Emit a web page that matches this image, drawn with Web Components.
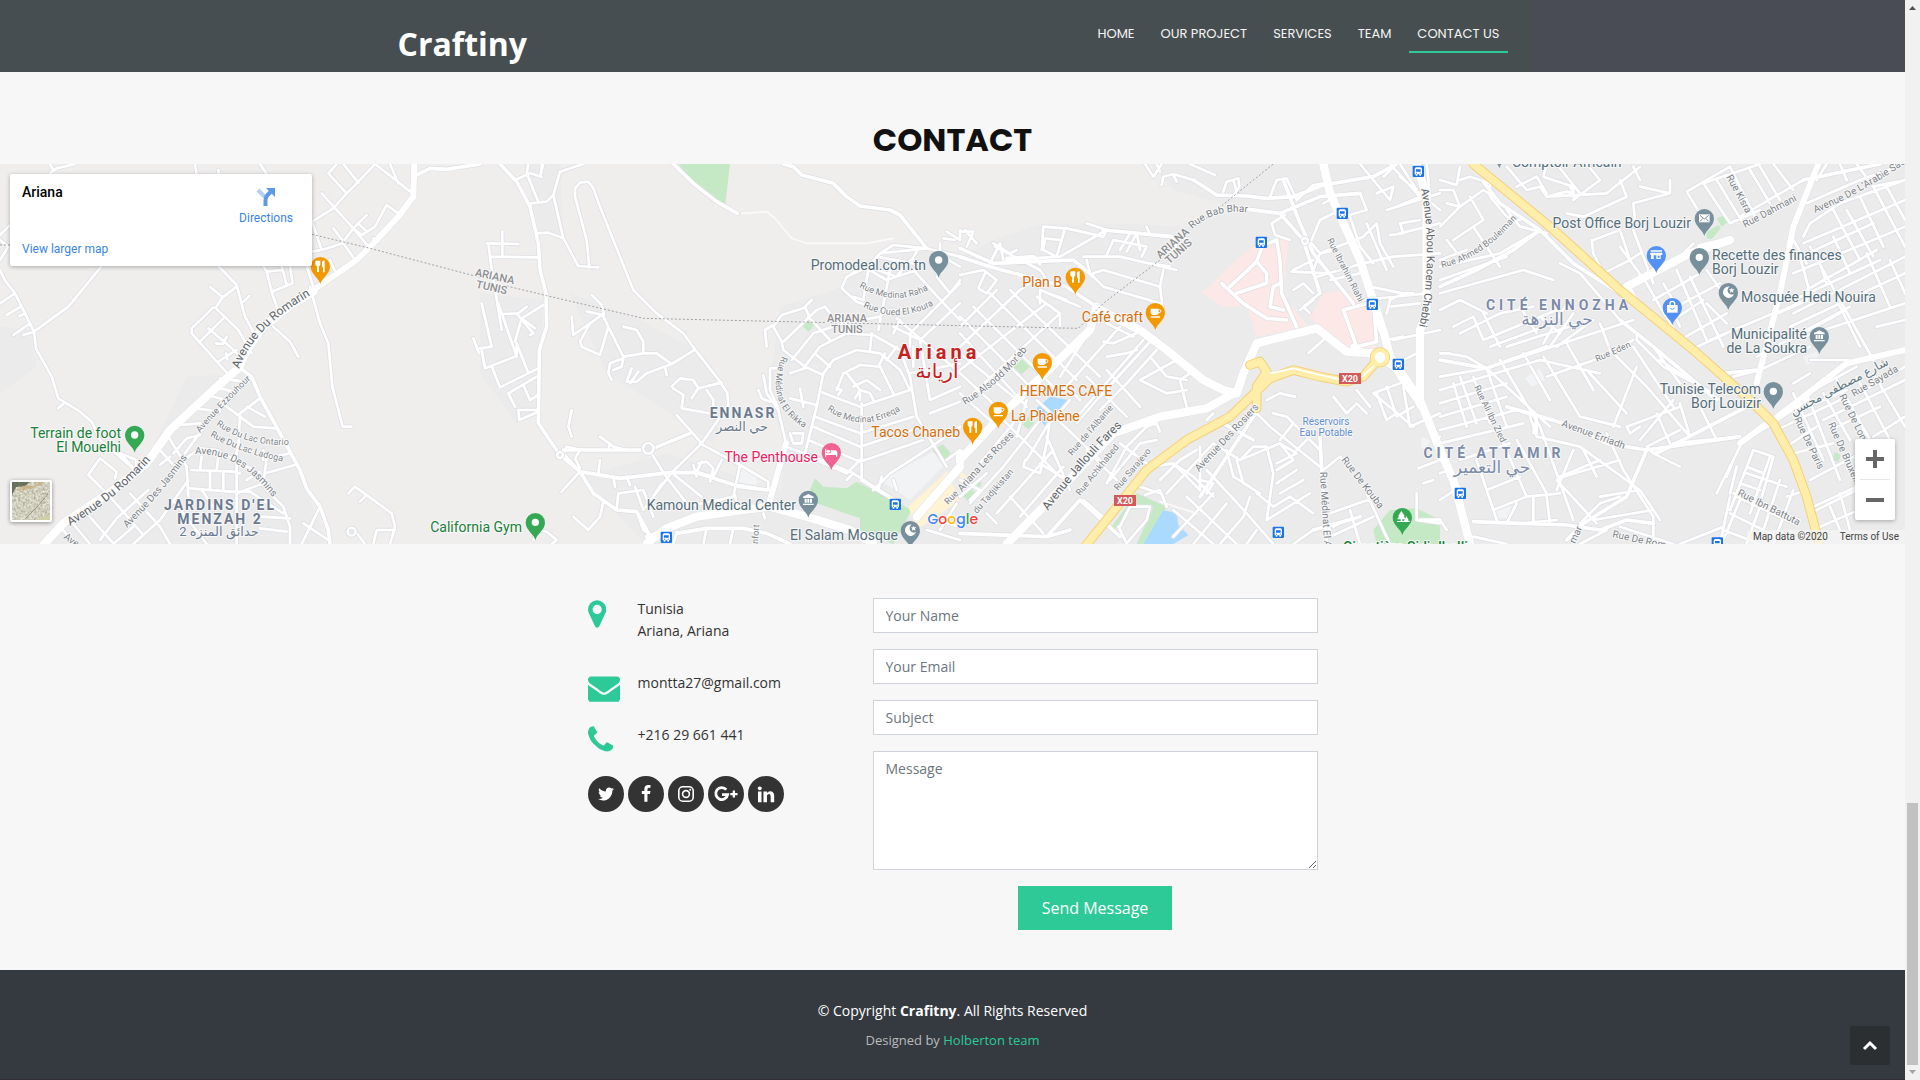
<!DOCTYPE html>
<html lang="en">
<head>
<meta charset="utf-8">
<title>Craftiny - Contact</title>
<style>
  html, body { margin: 0; background: #f7f7f7; }
  body { font: 14px/22px "Open Sans", sans-serif; color: #333; }
</style>
</head>
<body>
<craft-page>
  <site-header slot="header">
    <nav-link href="#home">HOME</nav-link>
    <nav-link href="#project">OUR PROJECT</nav-link>
    <nav-link href="#services">SERVICES</nav-link>
    <nav-link href="#team">TEAM</nav-link>
    <nav-link href="#contact" active>CONTACT US</nav-link>
  </site-header>
  <section-title>CONTACT</section-title>
  <city-map></city-map>
  <contact-panel>
    <contact-line slot="info" icon="marker">Tunisia<br>Ariana, Ariana</contact-line>
    <contact-line slot="info" icon="envelope">montta27@gmail.com</contact-line>
    <contact-line slot="info" icon="phone">+216 29 661 441</contact-line>
    <social-links slot="info"></social-links>
    <contact-form slot="form"></contact-form>
  </contact-panel>
  <site-footer slot="footer"></site-footer>
</craft-page>

<script>
const define = (name, html, setup) => {
  const tpl = document.createElement('template');
  tpl.innerHTML = '<style>*{box-sizing:border-box}</style>' + html;
  customElements.define(name, class extends HTMLElement {
    constructor() {
      super();
      this.attachShadow({ mode: 'open' }).append(tpl.content.cloneNode(true));
    }
    connectedCallback() { if (setup) setup(this, this.shadowRoot); }
  });
};

define('craft-page', `
<style>
  :host { display: grid; grid-template-columns: minmax(0, 1fr) 15px; min-height: 100vh; }
  .page { display: flex; flex-direction: column; }
  main { flex: 1; }
</style>
<div class="page">
  <slot name="header"></slot>
  <main><slot></slot></main>
  <slot name="footer"></slot>
</div>
<scroll-rail></scroll-rail>`);

define('scroll-rail', `
<style>
  :host { display: flex; flex-direction: column; align-items: center; background: #f1f1f1; height: 100vh; position: sticky; top: 0; }
  svg { display: block; width: 15px; height: 15px; }
  .track { flex: 1; width: 11px; display: flex; flex-direction: column; justify-content: flex-end; }
  .thumb { height: 25%; background: #c1c1c1; }
</style>
<svg viewBox="0 0 15 15"><path d="M4 10h7L7.500 6z" fill="#505050"/></svg>
<div class="track"><div class="thumb"></div></div>
<svg viewBox="0 0 15 15"><path d="M4 5h7L7.500 9z" fill="#a3a3a3"/></svg>`);

define('site-header', `
<style>
  :host { display: block; background: linear-gradient(90deg, #464e51 0, #464e50 80.400%, #494c55 80.500%, #494c55 100%); }
  .inner { max-width: 1110px; height: 72px; margin: 0 auto; display: flex; justify-content: space-between; align-items: flex-start; }
  a { margin-top: 22px; font: 700 32px/44px "Open Sans", sans-serif; color: #fff; text-decoration: none; }
  nav { display: flex; gap: 10px; margin-top: 15px; }
</style>
<header class="inner"><a href="#top">Craftiny</a><nav><slot></slot></nav></header>`);

define('nav-link', `
<style>
  :host { display: block; }
  a { display: block; height: 38px; padding: 0 8px; font: 400 13px/38px Poppins, Inter, sans-serif; color: #f4f4f4; text-decoration: none; white-space: nowrap; }
  :host([active]) a { border-bottom: 2px solid #2dca98; }
</style>
<a><slot></slot></a>`, (el, root) => root.querySelector('a').href = el.getAttribute('href'));

define('section-title', `
<style>
  :host { display: block; padding: 48px 0 4px; text-align: center; }
  h3 { margin: 0; font: 700 32px/40px Poppins, Inter, sans-serif; color: #111; }
</style>
<h3><slot></slot></h3>`);

define('contact-panel', `
<style>
  :host { display: grid; grid-template-columns: 255fr 445fr; column-gap: 30px; max-width: 730px; margin: 0 auto; padding: 54px 0 40px; }
  .info { display: flex; flex-direction: column; gap: 20px; }
</style>
<div class="info"><slot name="info"></slot></div>
<slot name="form"></slot>`);

const GLYPHS = {
  marker: ['384 0 1024 1792', 'M1152 640q0-106-75-181t-181-75-181 75-75 181 75 181 181 75 181-75 75-181zm256 0q0 109-33 179l-364 774q-16 33-47.5 52t-67.5 19-67.5-19-46.5-52l-365-774q-33-70-33-179 0-212 150-362t362-150 362 150 150 362z'],
  envelope: ['0 0 1792 1792', 'M1792 710v794q0 66-47 113t-113 47h-1472q-66 0-113-47t-47-113v-794q44 49 101 87 362 246 497 345 57 42 92.5 65.5t94.5 48 110 24.5h2q51 0 110-24.5t94.5-48 92.5-65.5q170-123 498-345 57-39 100-87zm0-294q0 79-49 151t-122 123q-376 261-468 325-10 7-42.5 31t-54 38.5-52 32.5-57.5 27-50 9h-2q-23 0-50-9t-57.5-27-52-32.5-54-38.5-42.5-31q-91-64-262-182.5t-205-142.5q-62-42-117-115.5t-55-136.5q0-78 41.5-130t118.5-52h1472q65 0 112.5 47t47.5 113z'],
  phone: ['192 0 1408 1792', 'M1600 1240q0 27-10 70.5t-21 68.5q-21 50-122 106-94 51-186 51-27 0-53-3.5t-57.5-12.5-47-14.5-55.5-20.5-49-18q-98-35-175-83-127-79-264-216t-216-264q-48-77-83-175-3-9-18-49t-20.5-55.5-14.5-47-12.5-57.5-3.5-53q0-92 51-186 56-101 106-122 25-11 68.5-21t70.5-10q14 0 21 3 18 6 53 76 11 19 30 54t35 63.5 31 53.5q3 4 17.5 25t21.5 35.5 7 28.5q0 20-28.5 50t-62 55-62 53-28.5 46q0 9 5 22.5t8.5 20.5 14 24 11.5 19q76 137 174 235t235 174q2 1 19 11.5t24 14 20.5 8.5 22.5 5q18 0 46-28.5t53-62 55-62 50-28.5q14 0 28.5 7t35.5 21.5 25 17.5q25 15 53.5 31t63.5 35 54 30q70 35 76 53 3 7 3 21z']
};

define('contact-line', `
<style>
  :host { display: grid; grid-template-columns: 50px 1fr; min-height: 32px; }
  :host([icon=marker]) { padding-bottom: 10px; }
  svg { display: block; height: 32px; fill: #2dca98; }
  p { margin: 0; }
</style>
<svg><path/></svg><p><slot></slot></p>`, (el, root) => {
  const [box, d] = GLYPHS[el.getAttribute('icon')];
  const svg = root.querySelector('svg');
  svg.setAttribute('viewBox', box);
  svg.setAttribute('preserveAspectRatio', 'xMinYMin meet');
  svg.firstChild.setAttribute('d', d);
});

define('social-links', `
<style>
  :host { display: flex; gap: 4px; }
  a { display: grid; place-items: center; width: 36px; height: 36px; border-radius: 50%; background: #333; }
  svg { width: 18px; height: 18px; fill: #fff; }
  svg.wide { width: 26px; }
</style>
<a href="#twitter" aria-label="Twitter"><svg viewBox="0 0 1792 1792"><path d="M1684 408q-67 98-162 167 1 14 1 42 0 130-38 259.5t-115.5 248.5-184.5 210.5-258 146-323 54.5q-271 0-496-145 35 4 78 4 225 0 401-138-105-2-188-64.5t-114-159.5q33 5 61 5 43 0 85-11-112-23-185.5-111.5t-73.5-205.5v-4q68 38 146 41-66-44-105-115t-39-154q0-88 44-163 121 149 294.5 238.5t371.5 99.5q-8-38-8-74 0-134 94.5-228.5t228.5-94.5q140 0 236 102 109-21 205-78-37 115-142 178 93-10 186-50z"/></svg></a>
<a href="#facebook" aria-label="Facebook"><svg viewBox="0 0 1792 1792"><path d="M1343 12v264h-157q-86 0-116 36t-30 108v189h293l-39 296h-254v759h-306v-759h-255v-296h255v-218q0-186 104-288.5t277-102.5q147 0 228 12z"/></svg></a>
<a href="#instagram" aria-label="Instagram"><svg viewBox="0 0 18 18"><rect x="1.800" y="1.800" width="14.400" height="14.400" rx="4" fill="none" stroke="#fff" stroke-width="1.600"/><circle cx="9" cy="9" r="3.400" fill="none" stroke="#fff" stroke-width="1.600"/><circle cx="13.200" cy="4.800" r="1"/></svg></a>
<a href="#google" aria-label="Google Plus"><svg class="wide" viewBox="0 0 26 18"><path d="M13.300 4.600A6 6 0 1 0 14.700 9.600H9" fill="none" stroke="#fff" stroke-width="2.800"/><path d="M22 5.500v2.400h2.500v2.300H22v2.400h-2.300v-2.400h-2.400V7.900h2.400V5.500z"/></svg></a>
<a href="#linkedin" aria-label="LinkedIn"><svg viewBox="300 290 1180 1180"><path d="M365 1414h231v-694h-231v694zm246-908q-1-52-36-86t-93-34-94.500 34-36.500 86q0 51 35.500 85.500t92.500 34.500h1q59 0 95-34.500t36-85.500zm585 908h231v-398q0-154-73-233t-193-79q-136 0-209 117h2v-101h-231q3 66 0 694h231v-388q0-38 7-56 15-35 45-59.500t74-24.500q116 0 116 157v371z"/></svg></a>`);

define('contact-form', `
<style>
  :host { display: block; }
  form { display: flex; flex-direction: column; gap: 16px; }
  input, textarea { display: block; width: 100%; margin: 0; border: 1px solid #ced4da; border-radius: 0; background: #fff; color: #495057; font: 14px/21px "Open Sans", sans-serif; padding: 6px 12px; }
  input { height: 35px; }
  textarea { height: 119px; resize: vertical; }
  ::placeholder { color: #6c757d; opacity: 1; }
  button { align-self: center; border: 0; background: #2dca98; color: #fff; font: 16px/24px "Open Sans", sans-serif; padding: 10px 24px; }
</style>
<form>
  <input type="text" aria-label="Your Name" placeholder="Your Name">
  <input type="email" aria-label="Your Email" placeholder="Your Email">
  <input type="text" aria-label="Subject" placeholder="Subject">
  <textarea aria-label="Message" placeholder="Message"></textarea>
  <button type="button">Send Message</button>
</form>`);

define('site-footer', `
<style>
  :host { display: block; background: #343a40; text-align: center; color: #fff; position: relative; padding: 30px 0 29px; border-bottom: 1px solid #322c3a; }
  .credits { margin-top: 8px; font-size: 13px; line-height: 20px; color: #bbb; }
  .credits a { color: #2dca98; text-decoration: none; }
  .top { position: absolute; right: 15px; bottom: 14px; width: 40px; height: 39px; display: grid; place-items: center; background: #2b2f32; border-radius: 2px; }
</style>
<footer>
  <div>© Copyright <strong>Crafitny</strong>. All Rights Reserved</div>
  <div class="credits">Designed by <a href="#team">Holberton team</a></div>
</footer>
<a class="top" href="#top" aria-label="Back to top"><svg width="16" height="12" viewBox="0 0 16 12"><path d="M2 9l6-6 6 6" fill="none" stroke="#fff" stroke-width="3"/></svg></a>`);

/* The map is surveyed on four sheets, each 1440 units wide, at three units per pixel. */
const SHEETS = [
{
  lane: `150 40 170 25 225 12|160 30 150 12|585 12 590 42|800 42 780 12|655 30 657 42|0 225 30 195|0 240 25 260 0 300|0 330 14 360 45 400 75 460 102 515|0 430 45 400|20 465 62 440|40 525 90 490|58 468 75 460|102 515 205 440 305 318|102 515 108 566 155 650 175 715 240 755 275 785 300 840 405 930|70 525 102 515|175 745 192 730|655 318 710 375 735 470 765 525|630 380 668 412|710 380 668 412 648 442|748 408 730 425|640 442 575 505 575 520 682 640|648 445 715 510 755 580|670 475 600 545|625 505 690 560 720 590|648 550 668 552 680 530|655 605 710 570|678 580 682 598|790 318 800 335 815 395 835 455|845 318 860 375|870 318 878 370 815 395|800 335 845 330|820 500 870 545 895 590|930 380 960 490 985 550 997 680 1028 800 1055 800|920 318 945 395|936 185 1000 145 1040 100 1070 70 1125 12|985 40 1010 12|985 40 1040 100|1030 12 1075 68|965 100 1060 205 1110 265|1125 12 1235 98|1195 70 1170 12|1000 205 1030 245 1060 205 1100 165|1075 190 1100 215|1060 205 1085 225 1125 200 1160 135 1195 160|936 185 965 270 1030 250 1065 300|936 275 965 270|990 300 1010 345|1120 235 1135 245|1420 535 1437 580|750 655 620 790 555 880|660 655 735 665|640 680 700 695|620 705 680 720|585 745 660 755|540 795 600 790|680 740 760 800 830 805|740 740 795 770|780 715 720 760 715 870|520 880 560 835 600 825|505 830 560 920 565 1010|480 870 520 915|480 915 510 890|545 905 600 865 650 870 760 930 800 990 850 1040 870 1100 870 1152|868 880 800 895 790 970 710 1000|885 915 795 940|790 870 790 900|710 870 710 1152|575 930 700 935 720 940|570 985 690 995 750 995|605 890 600 930|655 890 650 930|630 935 630 985|670 940 670 990|605 990 640 1040|750 995 850 1060|740 960 780 935|780 1070 870 1075|780 1105 860 1115|265 945 300 895 350 935 345 955|265 945 310 990|360 880 405 930 410 900 360 880|390 1000 480 1100 510 1152|445 990 350 1075 300 1140|565 960 480 1080 400 1152|180 1100 225 1152|210 1080 270 1152|260 1060 340 1150|330 1010 430 1125|520 1020 620 1152|400 1100 340 1152|1045 1000 1065 980 1175 1060 1185 1100 1170 1152|1080 1025 1095 1010|1040 1115 1060 1105 1095 1152|1120 1152 1130 1110 1185 1110|960 1040 905 1152|910 1090 985 1140`,
  street: `715 620 755 650 780 710 900 930 920 985 960 1040 985 1110 990 1152|1250 45 1290 25 1340 28 1440 12`,
  road: `1243 12 1240 110 1195 170 1120 250 1070 300 940 390`,
  avenue: `940 395 880 430 790 500 740 570 718 622 640 690 510 810 440 910 340 990 190 1090 130 1155`,
  blocks: ['560 650 740 640 900 930 980 1152 140 1152 440 900', '0 500 90 510 110 620 0 700'],
  rings: ['1055 1115 12']
},
{
  lane: `105 60 150 40 185 50|145 12 140 40 175 125|190 12 180 50|150 130 200 125 220 105 240 35 310 12|220 105 250 235 295 318 355 322|170 220 205 218 250 235|328 322 320 240 285 110 285 85 300 68 325 65 340 85 360 140 460 390 530 460 610 520 648 572 720 665 742 700 745 735 700 800 665 850 575 938 490 1050|20 250 115 252|67 215 67 290|25 250 30 290 172 292|30 295 45 385 65 510|55 430 110 590 110 550|72 462 115 460 140 440|190 435 125 475 105 545|110 460 160 520 150 525|125 475 165 505|5 430 35 560 0 565|5 570 15 625 110 588|35 618 60 682 175 625|110 550 145 640|170 650 85 700 105 740|130 675 150 720 175 705|175 750 115 750 118 780 175 755|275 470 280 525 330 490 365 465|335 405 365 435 372 465 320 455|370 470 385 500 360 585 305 560 300 545 330 490|385 500 430 590 490 580 530 580 575 612|430 500 470 510 490 545 490 580|430 595 390 610 385 640 395 660|430 595 425 620 400 630|440 665 470 665 500 640 575 612 640 572|455 625 440 665|475 635 450 670|555 620 560 645|575 680 600 655 640 660 655 685 725 668|580 685 610 705 605 745 690 760|655 685 635 715|680 690 700 720 700 750|590 765 665 850|185 12 185 30|245 995 300 935|300 935 250 880 260 860 300 870 285 895 300 925|360 830 400 860 440 870|385 870 390 850|275 750 265 800 275 830|505 865 555 945 620 1030 640 1050|360 900 355 940|400 950 405 980|440 950 450 975|640 915 650 950|655 910 680 905 700 925 690 965|725 900 700 950 650 935 665 905|660 850 780 915 865 965 865 990|780 915 760 1010 600 1045|780 975 865 990|765 1005 770 1040|575 938 665 1010|545 970 500 1040|410 1045 415 1000 490 990 520 1070|370 1025 360 1070 325 1110 280 1070|470 1055 490 1110 520 1130|465 980 490 1050|590 1115 580 1152|680 1105 670 1152|760 1105 750 1152|855 1075 850 1060|160 1140 170 1110 200 1115 230 1140 215 1152|910 570 905 545 880 500 905 465 970 445 995 420|975 440 990 475|880 495 855 510 860 560|910 545 1010 450 1035 440 1050 460|985 470 1050 540|910 570 975 620 1030 645|935 600 1000 520 1090 490 1200 470|850 645 860 700 895 750 918 850|870 625 870 690 895 745|835 690 845 715 870 725|875 625 905 625|930 640 975 625|1030 640 1010 740 975 880|970 625 1020 560 1100 520 1180 525 1260 570 1290 650 1310 770 1370 870|1030 640 1060 600 1130 570 1200 580 1260 630 1290 690|1070 690 1090 640 1140 615 1200 620 1240 700|1100 640 1140 690 1140 720|1120 680 1160 660 1200 690|1125 715 1140 690 1170 700 1180 720|1070 685 1085 690 1075 705|1010 585 1050 620|1175 520 1170 570|1250 560 1220 600|1215 580 1195 620|1020 695 1140 740 1290 690|930 715 1010 735|960 685 970 740|1005 770 1140 820 1300 770|1000 800 1140 860 1310 805|985 840 1140 905 1330 840|960 880 1100 940 1140 900|1145 730 1145 960|930 820 940 850 965 850 970 820 940 820|915 860 975 880 1120 940 1260 1030|1100 960 1120 940|1205 950 1195 990 1210 1000|1240 960 1250 990|1180 990 1230 940 1340 870 1440 800|1370 870 1400 920|1400 900 1440 870|1340 265 1240 255 1200 280 1165 320 1100 350 1085 385 1130 425 1200 450 1300 450|1200 280 1340 265 1440 290|1110 345 1150 320 1220 360 1310 330|1165 320 1250 350 1290 300|1190 290 1300 310|1310 275 1290 310|1165 330 1150 420 1120 410|1230 330 1195 510|1300 330 1400 440 1440 480|1370 350 1410 400 1440 360|1370 280 1440 320|1440 370 1290 520 1290 560|1250 475 1440 640|1440 430 1320 540 1240 500|1290 640 1440 610|1240 520 1260 480|1350 720 1440 680|1320 540 1350 720|1350 760 1440 725|1300 560 1300 620|1400 215 1440 240 1440 210|1390 235 1425 240|1380 270 1380 250|1340 1110 1440 1140|1370 1080 1440 1100|1430 1030 1380 1110`,
  street: `910 12 940 20 965 45 1060 70 1100 110 1140 138 1230 150 1260 165 1340 265|580 12 640 70 710 125 772 160|240 885 300 935 420 955 570 938 650 938 780 980 860 990|300 935 340 1000 410 1050 470 1055 500 1110 520 1145|250 870 500 870 520 865 630 820|60 12 110 65 150 140 175 250 180 330 198 400 200 500 178 570 175 790 240 885|1145 960 1260 1030|500 1130 540 1115|590 1120 680 1105 790 1105 860 1120 930 1152`,
  road: `918 850 870 1020`,
  avenue: `500 1150 560 1105 650 1070 790 1050 870 1040 980 1070 1110 1110 1180 1150|1310 1070 1440 920`,
  parks: ['595 12 750 12 736 132 700 115 640 70', '1005 955 1030 980 1100 985 1130 965 1295 1050 1240 1152 1140 1110 1140 1075 1010 1030 990 990', '985 480 1002 498 985 515 968 498', '1388 852 1412 880 1390 905 1358 872'],
  pale: ['785 920 830 945 830 985 775 965', '1200 960 1360 875 1390 920 1290 1020'],
  sand: ['1285 1040 1400 935 1440 1020 1310 1110'],
  blocks: ['0 400 190 420 175 750 110 790 0 640', '270 400 480 480 650 570 745 700 700 850 570 760 380 640', '900 440 1090 380 1160 300 1350 260 1440 280 1440 1152 500 1152 300 950 560 880 900 990 920 850 840 690 880 600', '130 12 240 12 250 235 180 220'],
  rings: ['505 865 16', '240 885 9']
},
{
  lane: `555 12 580 50 605 12|590 12 600 35|690 12 765 45|605 75 610 50 640 42 700 60|640 45 650 65|790 95 800 65 835 55 838 80 820 110|820 60 830 95|975 165 935 190 945 225 990 240|930 110 950 60 980 55 1010 120|1010 120 1060 75 1090 70|0 215 40 215 20 260|15 210 50 250|100 250 150 280 170 270|90 310 120 250 130 300|0 345 70 330 110 360 80 400 55 385 75 340|245 270 250 200 315 205 290 290 250 270 255 235 300 240|320 205 430 230 440 210 380 190|140 300 300 290 440 210 620 230|480 270 510 220|500 275 530 220|440 285 460 240 560 260 545 290|530 220 540 270|370 290 480 290 650 330|570 310 630 320|560 200 570 225|105 260 240 330 260 360|380 300 390 340 430 380 600 430|400 340 430 330 600 380|610 330 600 380 610 460|240 430 240 390 320 420|240 390 360 440|230 410 300 460 300 500|430 545 460 550 530 520|440 490 520 530|410 480 300 650|480 500 310 690|550 540 360 760|575 540 410 720 350 790|590 570 500 670 420 750|650 600 540 660 620 700 680 690|690 640 660 660 680 740|570 590 620 650 680 660|440 590 500 580 530 570|440 630 540 740|380 650 500 770|330 690 360 720|600 815 590 790 560 800 500 860 440 970|590 840 540 850 450 960|480 850 560 910|0 560 180 390 210 370|0 500 110 390|0 630 260 430|40 700 300 460|150 390 420 650|90 400 350 660|40 440 290 690|0 470 240 710|0 520 200 740|0 580 160 710|0 640 110 740|0 700 100 790|120 770 300 950|200 720 170 830|230 720 420 900|330 720 260 800 200 900|160 790 60 910|240 780 130 920 30 1030|280 870 110 1060|270 780 260 850 240 940 190 920 195 900|260 830 330 990|150 1010 250 1120|320 960 240 910|0 1010 80 940|370 1020 440 1080|380 870 470 960|310 920 180 1070|130 950 90 1000|30 1020 60 990 0 960|80 1060 110 1090|480 1100 510 1040 570 1040 560 1080 500 1150 475 1100|555 1005 600 990 620 1040|540 980 600 1000|580 920 640 910 720 990 720 860|600 960 660 900 710 870|640 910 700 950 760 1010|620 1000 760 850|740 930 860 1060 940 1152|680 1010 830 1152|640 1050 760 1152|760 1000 640 1130|800 1030 700 1152|850 1070 780 1152|890 1110 860 1152|720 960 760 970 740 1000|760 850 840 900 960 850 1000 900|830 900 850 970 900 1000|800 870 820 950 870 980|840 900 880 860 920 860 940 940 920 1080|960 850 1010 880 950 910|1000 900 950 930|1010 930 950 970|1030 960 960 1000|1050 1000 920 1080|890 1000 940 1040 990 1010 1060 1060|870 1010 850 1070|940 760 980 770 1080 870|880 750 930 800 1080 920|920 720 960 700 1005 710|960 840 1000 790|1010 870 1050 830|1140 890 1090 930|1140 890 1160 910|1080 830 1085 930|1220 1000 1270 1110 1290 1152|1170 1050 1200 1152|1110 1060 1250 1010|1120 1100 1160 1080|1060 1110 1000 1152|1240 1070 1110 1130|1090 1070 1110 1110|1120 710 1160 760 1190 730 1220 760|1190 690 1230 740|1250 700 1280 780 1310 760|1280 680 1310 770 1360 740|1240 700 1320 670|1330 680 1350 800 1440 760|1240 700 1360 800|1440 900 1375 925|1370 1000 1370 1080 1440 1090|1420 960 1390 970|1420 840 1440 830|1280 540 1330 530|740 780 760 760|1045 580 1090 540|1050 460 1030 440 1080 400|1020 450 1060 420|1060 400 1030 370 1000 390|995 335 1110 340|1060 330 1080 280 1130 270|1080 280 1210 230 1250 190|1000 330 1060 300|1070 350 1210 310 1300 290 1440 280|1110 360 1200 340|1080 280 1055 250|1080 180 1140 150 1110 120 1090 130|1080 180 1055 240|1150 105 1200 100 1220 150 1150 170|1170 170 1200 260 1240 310|1220 190 1280 330|1250 190 1260 250 1300 320|1320 50 1440 150|1200 12 1290 120 1300 80 1250 100|1270 50 1310 12|1290 12 1380 110|1440 100 1280 150|1380 110 1310 140|1380 180 1320 190 1330 220 1290 225|1440 190 1300 225|1210 420 1400 400|1230 380 1330 400 1290 420 1280 460|1330 400 1360 400|1290 440 1380 430|1320 12 1370 90|1400 12 1410 110|1300 540 1440 510|1310 610 1370 580`,
  street: `0 290 90 320 200 350 320 380 410 440|0 265 100 310 340 300 400 350|700 60 770 105 860 108 920 115 1000 110 1090 75 1240 50 1310 12|840 145 960 160 1080 110 1200 100|140 295 220 290 240 310|430 210 640 230 650 280|970 60 1020 190 1060 280 1180 430|960 160 1030 240 1080 400|785 370 850 430 920 475 980 480|890 305 920 340 920 370 830 400|910 250 890 305 810 380|925 250 950 240 960 300 965 400 1010 500|960 370 940 380 930 440 970 450|780 785 880 840|1150 450 1240 425 1250 545 1190 560 1150 450|1080 830 1085 930 1100 1152|720 1010 900 740|1380 1080 1440 1080|0 1120 260 1130 330 1110|260 1130 360 1020 480 1130|1060 1110 1200 1070`,
  road: `1180 560 1300 620 1370 720 1380 740`,
  avenue: `0 900 130 760 390 510 410 440|0 905 0 880|410 445 540 510 620 570 730 660 790 690 830 700 850 640 890 550 1070 505 1160 575 1240 580|140 1152 260 1030 460 820 600 770 740 745 830 695|1090 12 1110 100 1200 300 1275 530 1290 590|1370 12 1400 110 1400 460 1380 510 1380 720|1290 590 1380 720 1440 870`,
  parks: ['185 598 210 620 185 642 160 622', '205 770 222 790 205 808 188 795', '25 980 48 1000 22 1022 3 1002', '52 958 66 972 52 988 40 974', '455 1100 530 1000 620 1040 550 1152 530 1152 580 1040 500 1050 470 1105', '1240 1110 1290 1050 1370 1045 1440 1080 1440 1152 1250 1152'],
  water: ['230 745 270 710 325 720 305 745 265 775 255 798 240 780', '550 1152 610 1050 650 1060 655 1095 685 1125 640 1152'],
  medical: ['725 400 840 290 900 245 985 232 970 410 1045 500 890 530 860 440 790 440', '1050 470 1090 400 1150 390 1200 420 1245 420 1250 565 1160 570 1090 505'],
  sand: ['0 930 20 950 0 975'],
  pale: ['1385 830 1410 840 1400 870 1382 860'],
  blocks: ['0 290 0 1152 1440 1152 1440 12 570 12 640 90 840 145 690 200 430 190 250 190 100 240'],
  rings: ['1260 592 22', '1035 243 9'],
  highway: `870 615 900 605 920 635 890 680 890 745|375 1160 560 930 680 840 810 770 930 655 1000 630 1080 650 1160 665 1210 650 1240 615`,
  median: `930 640 1000 625 1080 645 1140 658|1200 655 1240 620`
},
{
  lane: `0 90 40 90 60 140 0 200|0 60 50 75 60 20|60 60 90 50 150 70 150 110|60 140 130 90 160 110|20 130 60 140|90 110 130 180 40 240|150 110 200 170 240 180|20 240 60 290|0 320 180 280 300 210|0 300 80 270|0 360 200 290|100 200 180 320|200 150 240 200 320 220|200 20 260 90 300 80 320 110 380 95 400 100 390 80|230 80 290 50 320 100|320 12 310 50 400 80 400 110|350 12 420 100|440 12 480 60 400 120|320 110 500 100 600 20|380 160 430 170 560 110|560 110 540 60|585 180 580 130 690 100 690 60|600 60 580 20|600 80 690 100|460 240 540 210 570 300 490 340 460 280 455 240|540 260 620 370|570 300 600 280|620 370 660 440 710 520|580 210 640 370|740 95 870 20|740 95 780 160|760 250 700 310|790 70 870 190|830 60 910 190|870 20 950 180|930 30 990 130|960 20 1020 120|790 70 960 12|870 190 960 150|900 170 1090 60|1000 12 1060 90|1100 130 1260 60 1395 12|1160 12 1130 60|1200 12 1220 60|1250 12 1300 80 1395 60|1090 230 1110 190 1200 130 1395 60|1090 250 1395 120|1060 300 1300 190|1060 340 1395 200|1180 150 1260 300|1220 150 1300 290|1260 110 1330 260|1060 240 1100 310|1110 260 1300 600|1300 80 1395 260|1340 80 1395 180|1080 290 1110 400|1130 280 1160 370|1100 390 1310 270|1060 420 1320 300|1060 460 1395 290|1050 500 1395 340|1180 230 1230 340|1280 280 1350 440|1200 440 1260 560|1350 300 1395 400|1050 540 1200 460|1090 530 1395 430|1310 500 1395 480|880 650 960 630 1110 560|950 590 1230 440|1110 600 1225 600|640 420 780 340|670 370 710 440 840 370|710 330 800 540|750 350 850 560|800 330 870 430|690 440 720 500|720 540 860 460|750 570 860 520|810 540 1000 460|700 480 790 420|800 430 860 490|0 400 250 330 340 360|360 310 420 340 540 480|0 450 60 420 140 460|40 500 100 470 130 540|60 520 180 460 280 440|130 540 350 450|150 560 340 490|200 560 420 490|310 550 380 430|330 560 400 460|350 560 460 480|300 470 360 520|130 460 180 560|240 440 290 520|20 580 80 590 140 625 330 800|0 650 140 625 580 480|0 690 300 600 480 640|0 580 30 580|100 650 150 790|40 670 80 800|60 650 110 790|140 625 200 800|180 600 300 800|0 730 200 670|0 770 200 710|0 810 230 750|0 850 250 790|200 740 290 770 280 820|250 580 330 720|310 590 420 770 540 800|320 650 490 590|380 550 460 690|480 490 510 570 620 680 750 830|590 520 590 540 670 620 820 700|640 560 720 670|580 540 530 570|440 630 560 760|590 620 520 800|580 560 700 740|660 600 840 720|560 800 720 740|560 800 570 820 600 800|650 760 690 850|720 730 750 830|620 860 720 810|620 860 640 880 670 870|700 720 600 840|760 700 830 840|700 850 900 830|640 880 720 920|290 820 290 770|270 770 290 830 420 860 600 990 660 1080|300 800 400 1080|500 820 550 930 640 1070|480 900 360 950|370 950 540 900|400 870 350 990|430 870 470 950|230 840 320 1000|110 900 170 1080|190 850 260 1010|60 900 210 850|140 990 240 950|160 1050 260 1010 360 1000|280 1010 280 1090|320 1010 330 1090|200 1090 230 1030|240 1090 350 1080|350 960 470 1090|420 1090 480 1030 540 1010|460 1080 640 1050|480 1010 600 990|640 1070 640 1152|870 1010 840 1152|900 860 830 1000|890 920 870 1000|940 870 870 1050|990 890 930 1060|940 870 1000 890 960 1030|920 920 970 940|900 970 960 990|890 1010 1060 1090|870 1060 1010 1130|1020 960 960 1140|1060 990 1000 1152|880 1000 1080 1080|920 940 1040 980|850 1110 960 1152|900 1020 850 1140|960 1040 920 1150|1040 1010 1100 990|720 1152 850 1100|1130 1050 1250 990|1140 1100 1280 1040|1200 1000 1230 1110|1170 1040 1200 1110|1000 780 1120 690 1250 620|1010 810 1200 720|1040 860 1130 800|1060 880 1180 850|1110 960 1260 880|1060 700 1150 900|1100 700 1200 960|1150 700 1230 840|1190 660 1290 840|1250 650 1350 840|1300 640 1395 800|1130 730 1220 690|1150 780 1395 660|1190 800 1320 740|1060 670 1110 640|1260 700 1395 620|1300 830 1395 770|1250 980 1120 1040|0 1020 60 980|0 940 30 930|0 1080 20 1110|100 1130 200 1152|860 950 880 900|540 1100 700 1152|500 1110 420 1152`,
  street: `0 380 110 330 220 270 300 210|130 65 180 130 300 210 400 310 540 400|200 740 370 790 500 850 620 870 900 830|540 480 640 560 830 720|140 625 320 560|650 880 960 720|910 840 980 800 1100 720|1090 60 1320 12|0 600 140 625|100 1085 380 1095 480 1110 560 1080 640 1090|380 1140 430 1090 560 1010 620 870|1010 460 1100 420|850 640 950 630`,
  road: `1135 12 1060 200 1020 400 950 670|1000 780 1220 610 1395 570|870 240 780 260|900 850 980 790`,
  avenue: `560 380 750 280 870 240|0 870 40 960 90 1152|560 380 580 420`,
  parks: ['800 215 835 195 842 205 815 238 800 235', '830 175 855 165 865 185 845 200', '1185 876 1202 885 1195 905 1176 900'],
  pale: ['255 655 300 625 315 660 275 680', '165 1045 210 1030 215 1075 175 1075', '1090 590 1130 575 1135 600 1100 615'],
  blocks: ['0 12 1395 12 1395 1152 0 1152'],
  highway: `100 12 330 200 540 390 760 570 930 720 1000 790 1060 900 1100 1010 1140 1160`
}];

const MINOR = '#7d8388', MAJOR = '#5f6468';
/* sheet, points along the street, size, colour, name */
const STREETS = [
  [0, '718 626 790 512 925 412', 12, MAJOR, 'Avenue Du Romarin'],
  [0, '210 1098 335 1010 445 910', 12, MAJOR, 'Avenue Du Romarin'],
  [0, '600 820 670 742 740 670', 9, MINOR, 'Avenue Ezzouhour'],
  [0, '648 796 740 840 850 855', 9, MINOR, 'Rue Du Lac Ontario'],
  [0, '630 828 720 870 825 900', 9, MINOR, 'Rue Du Lac Ladoga'],
  [0, '585 882 700 905 795 985', 10, MINOR, 'Avenue Des Jasmins'],
  [0, '380 1105 465 1015 545 915', 10, MINOR, 'Avenue Des Jasmins'],
  [0, '190 1135 230 1165', 10, MINOR, 'Avenue'],
  [1, '1138 380 1245 415 1350 388', 9, MINOR, 'Rue Medinat Raha'],
  [1, '1150 442 1260 466 1370 430', 9, MINOR, 'Rue Oued El Koura'],
  [1, '905 588 895 715 978 808', 9, MINOR, 'Rue Médinat El Rikka'],
  [1, '1040 750 1152 786 1270 748', 9, MINOR, 'Rue Medinat Erreqa'],
  [1, '1405 1035 1440 1000', 9, MINOR, 'Rue'],
  [1, '835 1152 837 1100', 9, MINOR, 'nfort'],
  [2, '695 208 765 165 845 155', 10, MINOR, 'Rue Bab Bhar'],
  [2, '15 735 110 665 190 585', 10, MINOR, 'Rue Alsodd Mor’eb'],
  [2, '5 995 78 915 150 840', 10, MINOR, 'Ariana Les Roses'],
  [2, '52 1062 160 940', 9, MINOR, 'du Tadjikistan'],
  [2, '335 888 450 755', 9, MINOR, 'Rue de l’Albanie'],
  [2, '360 1008 475 868', 9, MINOR, 'Rue Achkhabed'],
  [2, '475 992 570 878', 9, MINOR, 'Rue Sarajevo'],
  [2, '265 1052 365 925 472 812', 12, MAJOR, 'Avenue Jallouli Fares'],
  [2, '718 935 885 755', 10, MINOR, 'Avenue Des Rosiers'],
  [2, '1102 240 1190 418', 9, MINOR, 'Rue Ibrahim Riahi'],
  [2, '1383 88 1402 290 1378 500', 11, MAJOR, 'Avenue Abou Kacem Chebbi'],
  [2, '1080 935 1094 1200', 10, MINOR, 'Rue Médinat El Akid'],
  [2, '1142 900 1235 1020', 10, MINOR, 'Rue De Kouba'],
  [3, '5 325 110 280 208 200', 9, MINOR, 'Rue Ahmed Bouleiman'],
  [3, '858 50 910 145', 10, MINOR, 'Rue Kisra'],
  [3, '915 205 1055 130', 10, MINOR, 'Rue Dahmani'],
  [3, '1125 158 1250 98 1390 15', 10, MINOR, 'Avenue De L’Arabie Saoudite'],
  [3, '472 606 578 558', 9, MINOR, 'Rue Eden'],
  [3, '103 680 178 838', 9, MINOR, 'Rue Ali Ibn Zied'],
  [3, '362 798 535 862', 10, MINOR, 'Avenue Erriadh'],
  [3, '1062 778 1130 920', 10, MINOR, 'Rue De Paris'],
  [3, '1163 793 1245 975', 10, MINOR, 'Rue De Bruxelles'],
  [3, '1197 708 1280 880', 10, MINOR, 'Rue De Londres'],
  [3, '1242 712 1365 640', 10, MINOR, 'Rue Sayada'],
  [3, '890 1005 1060 1088', 10, MINOR, 'Rue Ibn Battuta'],
  [3, '515 1132 640 1158', 10, MINOR, 'Rue De Rome'],
  [3, '405 1152 430 1100', 10, MINOR, 'mar']
];

/* sheet, x, baseline, anchor, style, text, turn */
const NAMES = [
  [0, 364, 835, 'end', 'green', 'Terrain de foot'], [0, 362, 877, 'end', 'green', 'El Mouelhi'],
  [0, 660, 1050, 'middle', 'town', 'JARDINS D\'EL'], [0, 660, 1092, 'middle', 'town', 'MENZAH 2'],
  [0, 656, 1128, 'middle', 'arab', 'حدائق المنزه 2'],
  [1, 127, 1116, 'end', 'green', 'California Gym'],
  [1, 42, 360, 'middle', 'border', 'ARIANA', 12], [1, 34, 393, 'middle', 'border', 'TUNIS', 12],
  [1, 1100, 486, 'middle', 'border', 'ARIANA'], [1, 1100, 518, 'middle', 'border', 'TUNIS'],
  [1, 1338, 331, 'end', 'slate', 'Promodeal.com.tn'],
  [1, 789, 774, 'middle', 'town', 'ENNASR'], [1, 785, 812, 'middle', 'arab', 'حي النصر'],
  [1, 1015, 906, 'end', 'pink', 'The Penthouse'], [1, 948, 1051, 'end', 'slate', 'Kamoun Medical Center'],
  [1, 1253, 1141, 'end', 'slate', 'El Salam Mosque'], [1, 1440, 832, 'end', 'orange', 'Tacos Chaneb'],
  [1, 1377, 598, 'middle', 'city', 'Ariana'], [1, 1372, 655, 'middle', 'cityarab', 'أريانة'],
  [2, 307, 382, 'end', 'orange', 'Plan B'], [2, 548, 487, 'end', 'orange', 'Café craft'],
  [2, 319, 708, 'middle', 'orange', 'HERMES CAFE'], [2, 154, 784, 'start', 'orange', 'La Phalène'],
  [2, 645, 258, 'middle', 'border', 'ARIANA', -42], [2, 664, 282, 'middle', 'border', 'TUNIS', -42],
  [2, 1097, 796, 'middle', 'water', 'Réservoirs'], [2, 1097, 829, 'middle', 'water', 'Eau Potable'],
  [2, 1148, 1176, 'start', 'green bold', 'Cimetière Sidi Jbelli'],
  [3, 217, 20, 'start', 'slate', 'Comptoir Africain'],
  [3, 754, 205, 'end', 'slate', 'Post Office Borj Louzir'],
  [3, 816, 300, 'start', 'slate', 'Recette des finances'], [3, 816, 342, 'start', 'slate', 'Borj Louzir'],
  [3, 903, 426, 'start', 'slate', 'Mosquée Hedi Nouira'],
  [3, 1100, 538, 'end', 'slate', 'Municipalité'], [3, 1100, 579, 'end', 'slate', 'de La Soukra'],
  [3, 962, 703, 'end', 'slate', 'Tunisie Telecom'], [3, 962, 745, 'end', 'slate', 'Borj Louizir'],
  [3, 357, 450, 'middle', 'suburb', 'CITÉ ENNOZHA'], [3, 352, 494, 'middle', 'suburbarab', 'حي النزهة'],
  [3, 163, 894, 'middle', 'suburb', 'CITÉ ATTAMIR'], [3, 155, 938, 'middle', 'suburbarab', 'حي التعمير'],
  [3, 1202, 690, 'middle', 'arabstreet', 'شارع مصطفى محسن', -28]
];

/* sheet, tip x, tip y, colour, symbol */
const PINS = [
  [0, 961, 372, '#f29900', 'food'], [0, 404, 878, '#34a853', 'dot'], [1, 166, 1140, '#34a853', 'dot'],
  [1, 1376, 353, '#78909c', 'dot'], [1, 1054, 930, '#f06292', 'bed'], [1, 985, 1073, '#78909c', 'hall'],
  [1, 1291, 1164, '#78909c', 'moon'], [2, 346, 404, '#f29900', 'food'], [2, 586, 510, '#f29900', 'cup'],
  [2, 247, 660, '#f29900', 'cup'], [2, 115, 806, '#f29900', 'cup'], [2, 38, 854, '#f29900', 'food'],
  [2, 1327, 1125, '#34a853', 'tree'], [3, 793, 228, '#78909c', 'mail'], [3, 649, 339, '#5491f5', 'shop'],
  [3, 778, 345, '#78909c', 'dot'], [3, 865, 450, '#78909c', 'moon'], [3, 697, 495, '#5491f5', 'bag'],
  [3, 1138, 582, '#78909c', 'hall'], [3, 1000, 747, '#78909c', 'dot'], [3, 178, 25, '#78909c', 'dot']
];
const SYMBOLS = {
  dot: '<circle r="11"/>',
  food: '<path d="M-15-17h15v10q0 6-4 6v18h-6V-1q-5 0-5-6zM5-10q0-8 8-8v36H8V3H5z"/>',
  cup: '<path d="M-14-11h24v11q0 8-8 8h-8q-8 0-8-8zM-14 12h28v4h-28z"/><path d="M10-8h3q4 0 4 4 0 5-8 6" fill="none" stroke="#fff" stroke-width="3"/>',
  bed: '<path d="M-19-11h4V3h13v-9h13q7 0 7 7v12h-4V8h-29v5h-4z"/><circle cx="-9" cy="-3" r="5"/>',
  hall: '<path d="M0-18l16 8v4h-32v-4zM-11-4h6v12h-6zM5-4h6v12H5zM-3-4h6v12h-6zM-16 11h32v4h-32z"/>',
  moon: '<path d="M4-17A17 17 0 1 0 17 5 12 12 0 1 1 4-17z"/><path d="M10-14l2 5 6 0-4 4 1 6-5-3-5 3 1-6-4-4h6z"/>',
  tree: '<path d="M-3-19l11 16H4l6 9H0v5h-5V6h-11l7-9h-4z"/><path d="M7 6l5-9 6 9v4h4v4h-38v-3h20z"/>',
  mail: '<path d="M-16-12h32v24h-32z"/><path d="M-13-9L0 2 13-9M-13 9l9-9M13 9l-9-9" fill="none" stroke="#78909c" stroke-width="3"/>',
  shop: '<path d="M-17-15h34v4h-34zM-18-8h36v7H13v12H0V0h-8v11h-8V-1h-2zM4 1v6h6V1z" fill-rule="evenodd"/>',
  bag: '<path d="M-16-7h32v23h-32z"/><path d="M-7-6v-5a7 7 0 0 1 14 0v5" fill="none" stroke="#fff" stroke-width="4"/><path d="M-7 1q7 10 14 0" fill="none" stroke="#5491f5" stroke-width="3"/>'
};
const STOPS = [[1, 559, 1132], [1, 1246, 1033], [2, 904, 247], [2, 1147, 160], [2, 1237, 433], [2, 1315, 613], [2, 955, 1117], [2, 1375, 34], [3, 61, 1000], [3, 832, 1149]];

const place = (sheet, x, y) => [Math.round(sheet * 480 + x / 3), Math.round(y / 3 - 4)];
const line = run => run.split('|').map(s => 'M' + s.trim()).join('');

function drawMap() {
  const onSheets = fn => SHEETS.map((s, i) => `<g transform="translate(${i * 1440} 0)">${fn(s)}</g>`).join('');
  const area = (key, fill) => onSheets(s => (s[key] || []).map(p => `<polygon points="${p}" fill="${fill}"/>`).join(''));
  const way = (key, width, colour) => onSheets(s => s[key] ? `<path d="${line(s[key])}" stroke="${colour}" stroke-width="${width}"/>` : '');
  const ring = (extra, colour) => onSheets(s => (s.rings || []).map(r => {
    const [x, y, rad] = r.split(' ');
    const big = rad > 20;
    return `<circle cx="${x}" cy="${y}" r="${rad}" stroke="${big ? (extra ? '#f5cf78' : '#ffeeaa') : colour}" stroke-width="${(big ? 12 : 7) + extra}" fill="${big ? '#fff' : '#e6e7ea'}"/>`;
  }).join(''));
  const ground = area('blocks', '#ebebec') + area('pale', '#f1f3f5') + area('parks', '#c5e8c5') + area('medical', '#fce8e6') + area('sand', '#fef3d2') + area('water', '#aadaff');
  const ways = way('lane', 13, '#dfe0e5') + way('street', 15, '#dcdee3') + way('road', 21, '#dfe1e5') + way('avenue', 28, '#e1e3e6')
    + way('lane', 8, '#fff') + way('street', 11, '#fff') + way('road', 18, '#fff') + way('avenue', 25, '#fff')
    + way('highway', 29, '#f5cf78') + ring(5, '#dcdee3') + way('highway', 23, '#ffeeaa') + ring(0, '#fff') + way('median', 5, '#fff');
  const border = '<path d="M0 255L30 255M936 223L1110 265 1440 352M1520 378L1640 407 1930 475 2880 497 3235 505 3310 430 3480 300M3600 190L3820 12" stroke="#a0a0a4" stroke-width="3" stroke-dasharray="6 6"/>';
  const stops = STOPS.map(([s, x, y]) => `<g transform="translate(${s * 1440 + x} ${y})"><rect x="-17" y="-17" width="34" height="34" rx="3" fill="#1a73e8"/><path d="M-11-7q0-5 5-5H6q5 0 5 5V9H8v4H3V9h-6v4h-5V9h-3zM-7-6v7H7v-7zM-7 4v3h3V4zM4 4v3h3V4z" fill="#fff" fill-rule="evenodd"/></g>`).join('');
  const pins = PINS.map(([s, x, y, c, k]) => `<g transform="translate(${s * 1440 + x} ${y})"><path d="M0 0C-4-18-29-30-29-52A29 29 0 1 1 29-52C29-30 4-18 0 0Z" fill="${c}"/><g transform="translate(0 -53)" fill="#fff">${SYMBOLS[k]}</g></g>`).join('');
  const guides = STREETS.map(([s, pts], i) => {
    const n = pts.split(' ').map(Number), p = [];
    for (let j = 0; j < n.length; j += 2) p.push(place(s, n[j], n[j + 1]));
    if (p.length === 3) {
      const [a, b, c] = p;
      const q = [Math.round(2 * b[0] - (a[0] + c[0]) / 2), Math.round(2 * b[1] - (a[1] + c[1]) / 2)];
      return `<path id="way${i}" d="M${a}Q${q} ${c}l${[c[0] - q[0], c[1] - q[1]]}"/>`;
    }
    const [a, b] = p;
    return `<path id="way${i}" d="M${a}L${b}l${[b[0] - a[0], b[1] - a[1]]}"/>`;
  }).join('');
  const streets = STREETS.map(([, , size, colour, name], i) => `<text font-size="${size}" fill="${colour}"><textPath href="#way${i}">${name}</textPath></text>`).join('');
  const names = NAMES.map(([s, x, y, anchor, style, text, turn]) => {
    const [px, py] = place(s, x, y);
    return `<text x="${px}" y="${py}" text-anchor="${anchor}" class="${style}"${turn ? ` transform="rotate(${turn} ${px} ${py})"` : ''}>${text}</text>`;
  }).join('');
  const shields = [[1350, 214], [1125, 336]].map(([x, y]) => `<rect x="${x - 11}" y="${y - 5}" width="22" height="11" fill="#d5595c"/><text x="${x}" y="${y + 4}" text-anchor="middle" class="shield">X20</text>`).join('');
  return `<defs>${guides}</defs><rect width="1905" height="380" fill="#efeeed"/>
    <g transform="translate(0 -4) scale(0.333333)"><g>${ground}</g><g fill="none" stroke-linejoin="round" stroke-linecap="round">${ways}<path d="M2225 160L2300 155 2325 175 2375 235 2420 250 2600 250 2680 235M3480 1025L3590 1060" stroke="#fafafa" stroke-width="5"/></g><g fill="none">${border}</g>${stops}</g>
    ${streets}${names}${shields}<g transform="translate(0 -4) scale(0.333333)">${pins}</g>`;
}

define('city-map', `
<style>
  :host { display: grid; height: 380px; overflow: hidden; position: relative; font-family: Roboto, sans-serif; }
  .canvas { width: 100%; height: 380px; display: block; }
  .canvas text { font-family: Roboto, "Noto Sans", "DejaVu Sans", sans-serif; paint-order: stroke; stroke: #f8f8f8; stroke-width: 2px; stroke-linejoin: round; }
  .green, .slate, .orange, .pink { font-size: 14px; }
  .green { fill: #188038; } .slate { fill: #546e7a; } .orange { fill: #d56e0c; } .pink { fill: #e91e63; }
  .bold { font-weight: 500; }
  .town { font-size: 14px; font-weight: 700; letter-spacing: 2px; fill: #6b7a8f; }
  .arab { font-size: 13px; fill: #6b7a8f; }
  .suburb { font-size: 14px; font-weight: 700; letter-spacing: 4px; fill: #7b8ba8; }
  .suburbarab { font-size: 17px; fill: #7b8ba8; }
  .arabstreet { font-size: 12px; fill: #5f7882; }
  .border { font-size: 11px; font-weight: 500; fill: #8e8e90; }
  .city { font-size: 20px; font-weight: 700; letter-spacing: 4px; fill: #c5221f; }
  .cityarab { font-size: 20px; fill: #c5221f; }
  .water { font-size: 10px; fill: #5f8fd0; }
  .canvas .shield { font-size: 9px; font-weight: 700; fill: #fff; stroke: none; }
  a { color: #3a84df; text-decoration: none; }
  .card { position: absolute; left: 10px; top: 10px; width: 302px; height: 92px; padding: 8px 19px 8px 12px; display: grid; grid-template-columns: 1fr auto; background: #fff; border-radius: 2px; box-shadow: 0 1px 4px rgba(0,0,0,.3); font-size: 12px; line-height: 18px; }
  .card strong { font-size: 14px; font-weight: 500; line-height: 20px; color: #000; }
  .dir { display: grid; justify-items: center; align-content: start; row-gap: 2px; padding-top: 5px; }
  .dir svg { display: block; }
  .larger { align-self: end; }
  .sat { position: absolute; left: 10px; bottom: 22px; width: 42px; height: 42px; padding: 2px; border: 0; border-radius: 2px; background: #fff; box-shadow: 0 1px 4px rgba(0,0,0,.4); }
  .sat svg { display: block; }
  .zoom { position: absolute; right: 10px; bottom: 24px; width: 40px; height: 81px; padding: 0 5px; display: grid; grid-template-rows: 40px 41px; background: #fff; border-radius: 2px; box-shadow: 0 1px 4px rgba(0,0,0,.3); }
  .zoom button { display: grid; place-items: center; border: 0; padding: 0; background: none; }
  .zoom button + button { border-top: 1px solid #e6e6e6; }
  .legal { position: absolute; right: 0; bottom: 0; display: flex; gap: 12px; padding: 0 6px; height: 14px; background: rgba(245,245,245,.7); font-size: 10px; line-height: 14px; color: #444; }
  .legal a { color: #444; }
  .google { position: absolute; left: 50%; bottom: 15px; margin-left: -25px; font: 500 14px/20px Poppins, Inter, sans-serif; text-shadow: 0 0 2px #fff, 0 0 2px #fff; }
</style>
<svg class="canvas" viewBox="0 0 1905 380" preserveAspectRatio="xMidYMid slice">${drawMap()}</svg>
<div class="card">
  <strong>Ariana</strong>
  <a class="dir" href="#directions"><svg width="20" height="20" viewBox="0 0 20 20"><path d="M2 3l7 7" stroke="#b3d1f7" stroke-width="4" fill="none"/><path d="M9.500 19v-6q0-3 2-5l4-4" stroke="#5c9ae8" stroke-width="4" fill="none"/><path d="M10 1h9v9z" fill="#5c9ae8"/></svg>Directions</a>
  <a class="larger" href="#map">View larger map</a>
</div>
<button class="sat" aria-label="Satellite view"><svg width="38" height="38" viewBox="0 0 38 38">
  <filter id="grain" x="0" y="0" width="1" height="1"><feTurbulence type="fractalNoise" baseFrequency=".45" numOctaves="3" seed="4"/><feColorMatrix values=".7 0 0 0 .28  .7 0 0 0 .27  .7 0 0 0 .16  0 0 0 0 1"/></filter>
  <rect width="38" height="38" fill="#aaa68c"/><rect width="38" height="38" filter="url(#grain)"/>
  <path d="M0 0h18l-5 4-9 1-4 8z" fill="#3e4a32" opacity=".7"/><path d="M4 9l10-6 8 1 5-4h6l-14 7z" fill="#c8a468" opacity=".6"/><path d="M14 36l10-10L36 12" stroke="#65604c" fill="none" opacity=".5"/><path d="M24 38l14-6v6z" fill="#cfcf9e" opacity=".8"/></svg></button>
<div class="google"><span style="color:#4285f4">G</span><span style="color:#ea4335">o</span><span style="color:#fbbc05">o</span><span style="color:#4285f4">g</span><span style="color:#34a853">l</span><span style="color:#ea4335">e</span></div>
<div class="zoom">
  <button aria-label="Zoom in"><svg width="18" height="18" viewBox="0 0 18 18"><path d="M0 9h18M9 0v18" stroke="#666" stroke-width="4"/></svg></button>
  <button aria-label="Zoom out"><svg width="18" height="18" viewBox="0 0 18 18"><path d="M0 9h18" stroke="#666" stroke-width="4"/></svg></button>
</div>
<div class="legal"><span>Map data ©2020</span><a href="#terms">Terms of Use</a></div>`);
</script>
</body>
</html>
